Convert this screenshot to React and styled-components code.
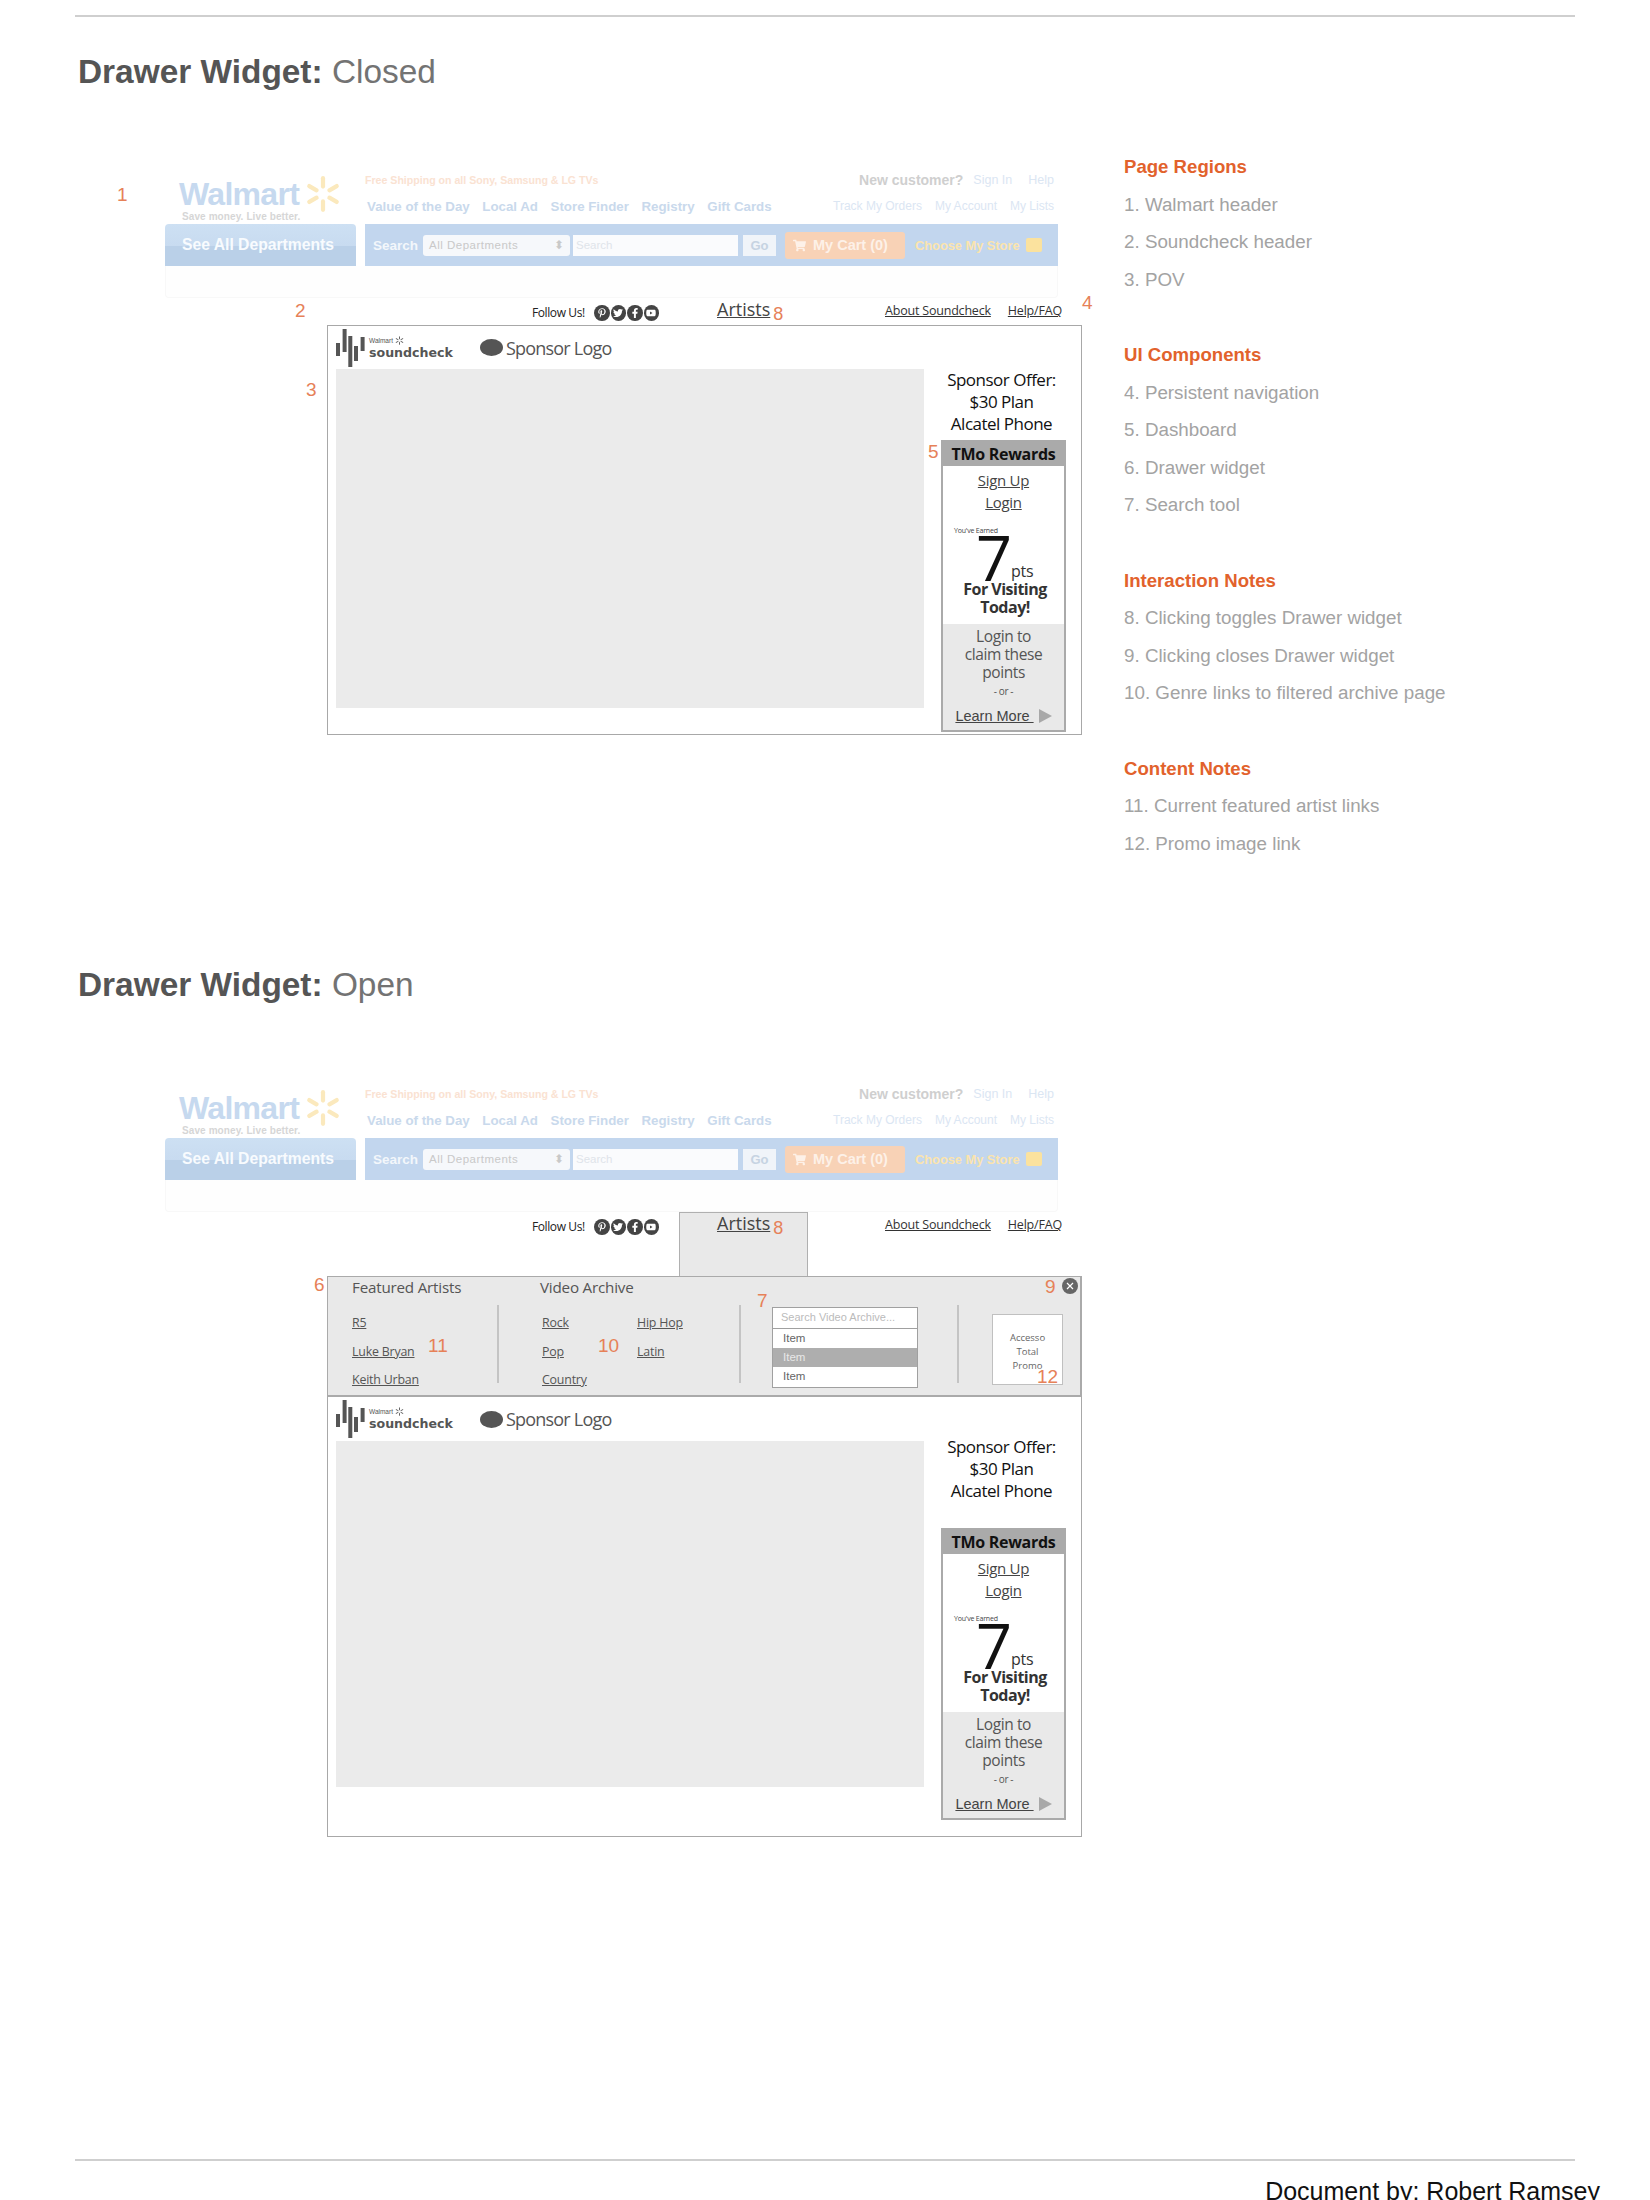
import styled, { createGlobalStyle } from "styled-components"
import { FaFacebookF, FaPinterestP, FaTwitter, FaYoutube, FaShoppingCart } from "react-icons/fa"

const GlobalStyle = createGlobalStyle`
    html, body {
        margin: 0;
        padding: 0;
        height: 2200px;
        overflow: hidden;
        background: #fff;
        font-family: "Liberation Sans", Arial, sans-serif;
    }
`

const wire = `"Open Sans", "Liberation Sans", sans-serif`

const Sheet = styled.div`
    width: 1650px;
    height: 2200px;
    padding-top: 15px;
    box-sizing: border-box;
    overflow: hidden;
`
const Rule = styled.hr`
    width: 1500px;
    height: 2px;
    margin: 0 0 0 75px;
    border: 0;
    background: #cfcfcf;
`
const Section = styled.section`
    height: ${(p) => p.$height}px;
    margin-top: ${(p) => p.$top}px;
`
const Title = styled.h2`
    margin: 0 0 58px 78px;
    font-size: 33.4px;
    line-height: 40px;
    font-weight: 700;
    color: #555;
    span {
        font-weight: 400;
        color: #737373;
    }
`
const Row = styled.div`
    display: flex;
    align-items: flex-start;
`
const WireColumn = styled.div`
    position: relative;
    width: 917px;
    margin-left: 165px;
    padding-top: ${(p) => p.$top}px;
    flex: none;
`
const Marker = styled.span`
    position: absolute;
    left: ${(p) => p.$x}px;
    top: ${(p) => p.$y}px;
    font-size: 19px;
    line-height: 22px;
    color: #e68158;
`

/* washed out walmart header */
const WalmartTop = styled.div`
    display: flex;
    width: 893px;
    height: 54px;
`
const LogoBlock = styled.div`
    position: relative;
    width: 200px;
    flex: none;
    padding: 8px 0 0 14px;
    box-sizing: border-box;
`
const LogoWord = styled.div`
    font-size: 32px;
    line-height: 33px;
    font-weight: 700;
    letter-spacing: -0.7px;
    color: #c6d9ef;
`
const LogoTag = styled.div`
    font-size: 10px;
    line-height: 11px;
    font-weight: 700;
    color: #d6d6d6;
    letter-spacing: 0.1px;
    margin-left: 3px;
`
const Spark = styled.div`
    position: absolute;
    left: 139px;
    top: 5px;
`
const TopRight = styled.div`
    flex: 1;
    padding-right: 4px;
`
const TopLine = styled.div`
    display: flex;
    justify-content: space-between;
    align-items: center;
    height: ${(p) => p.$h}px;
`
const Promo = styled.span`
    font-size: 10.6px;
    font-weight: 700;
    color: #fae2d2;
`
const LinkRun = styled.div`
    display: flex;
    align-items: center;
    gap: ${(p) => p.$gap}px;
    padding-left: ${(p) => p.$pad || 0}px;
`
const TopLink = styled.span`
    margin-left: ${(p) => p.$left || 0}px;
    font-size: ${(p) => p.$size}px;
    font-weight: ${(p) => (p.$bold ? 700 : 400)};
    color: ${(p) => p.$color};
`
const Bar = styled.div`
    display: flex;
    height: 42px;
    width: 893px;
    gap: 9px;
`
const DeptTab = styled.div`
    width: 191px;
    flex: none;
    box-sizing: border-box;
    padding-left: 17px;
    border-radius: 4px 4px 0 0;
    background: linear-gradient(#cde0f3 0, #c8dbf0 52%, #bad0e8 53%, #bad0e8 100%);
    color: #f8fbfe;
    font-size: 15.7px;
    font-weight: 700;
    line-height: 42px;
    white-space: nowrap;
`
const SearchBar = styled.div`
    flex: 1;
    display: flex;
    align-items: center;
    background: #c2d6ee;
    padding-left: 8px;
`
const SearchLabel = styled.span`
    width: 50px;
    flex: none;
    font-size: 13.5px;
    font-weight: 700;
    color: #f3f7fb;
`
const SelectBox = styled.div`
    display: flex;
    justify-content: space-between;
    align-items: center;
    width: 147px;
    height: 21px;
    box-sizing: border-box;
    padding: 0 6px;
    margin-right: 3px;
    background: #f6f8fb;
    border-radius: 3px;
    font-size: 11.5px;
    letter-spacing: 0.5px;
    color: #c9c9c9;
`
const SearchField = styled.div`
    width: 165px;
    height: 21px;
    box-sizing: border-box;
    padding-left: 3px;
    background: #fafbfd;
    font-size: 11.5px;
    line-height: 21px;
    color: #dfe4ea;
`
const GoButton = styled.div`
    width: 33px;
    height: 21px;
    margin: 0 9px 0 5px;
    background: #f0f4f9;
    text-align: center;
    font-size: 13px;
    font-weight: 700;
    line-height: 21px;
    color: #c6d3e2;
`
const CartButton = styled.div`
    display: flex;
    align-items: center;
    gap: 7px;
    width: 120px;
    height: 27px;
    box-sizing: border-box;
    padding-left: 8px;
    border-radius: 3px;
    background: #f8d2b6;
    font-size: 14.5px;
    font-weight: 700;
    color: #fdf1e8;
    white-space: nowrap;
`
const StoreLabel = styled.span`
    margin-left: 10px;
    font-size: 12.8px;
    font-weight: 700;
    color: #fbe4ad;
    white-space: nowrap;
`
const StoreIcon = styled.span`
    width: 16px;
    height: 14px;
    margin-left: 6px;
    border-radius: 2px;
    background: #fbe29e;
`
const BarPanel = styled.div`
    width: 893px;
    height: 32px;
    box-sizing: border-box;
    border: 1px solid #f8f8f8;
    border-top: 0;
    border-radius: 0 0 4px 4px;
    background: #fefefe;
`

/* soundcheck nav */
const SoundNav = styled.div`
    display: flex;
    align-items: flex-start;
    height: ${(p) => (p.$open ? 64 : 27)}px;
    padding-left: 367px;
    font-family: ${wire};
`
const FollowUs = styled.div`
    display: flex;
    align-items: center;
    width: 128px;
    flex: none;
    height: 25px;
    margin-top: 2px;
    font-size: 12px;
    letter-spacing: -0.4px;
    color: #222;
    span {
        width: 62px;
        flex: none;
    }
`
const SocialDot = styled.i`
    display: flex;
    align-items: center;
    justify-content: center;
    width: 16px;
    height: 16px;
    margin-right: 1px;
    border-radius: 50%;
    background: #444;
    color: #fff;
    font-size: 10px;
`
const ArtistsTab = styled.div`
    width: 129px;
    height: ${(p) => (p.$open ? 64 : 27)}px;
    flex: none;
    margin-left: 19px;
    box-sizing: border-box;
    padding-left: 37px;
    border: 1px solid ${(p) => (p.$open ? "#b0b0b0" : "transparent")};
    border-bottom: 0;
    background: ${(p) => (p.$open ? "#e9e9e9" : "transparent")};
    line-height: 20px;
    white-space: nowrap;
    u {
        font-size: 18px;
        color: #444;
    }
    span {
        font-family: "Liberation Sans", sans-serif;
        font-size: 18px;
        color: #e68158;
        margin-left: 3px;
        position: relative;
        top: 4px;
    }
`
const NavLink = styled.u`
    flex: none;
    margin-left: ${(p) => p.$left}px;
    margin-top: 3px;
    font-size: 12.5px;
    letter-spacing: -0.2px;
    line-height: 20px;
    color: #333;
`

/* drawer */
const Drawer = styled.div`
    position: relative;
    display: grid;
    grid-template-columns: 145px 242px 218px 125px;
    grid-template-rows: 24px 82px;
    width: 755px;
    height: 121px;
    margin-left: 162px;
    box-sizing: border-box;
    padding: 0 0 0 24px;
    border: 1px solid #aaa;
    border-width: 1px 2px 2px 1px;
    background: #e9e9e9;
    font-family: ${wire};
`
const DrawerHead = styled.div`
    font-size: 15.2px;
    line-height: 20px;
    letter-spacing: -0.2px;
    color: #555;
    padding-left: ${(p) => p.$pad || 0}px;
`
const DrawerCell = styled.div`
    box-sizing: border-box;
    padding-left: ${(p) => p.$pad || 0}px;
    margin-top: 4px;
    border-left: ${(p) => (p.$rule ? "2px solid #c4c4c4" : "0")};
`
const LinkColumn = styled.div`
    display: grid;
    grid-template-columns: ${(p) => p.$cols};
    grid-auto-rows: 28.5px;
    padding-top: 8px;
    font-size: 12.4px;
    letter-spacing: -0.2px;
    line-height: 20px;
    color: #555;
    u {
        justify-self: start;
    }
`
const SearchTool = styled.div`
    width: 146px;
    height: 81px;
    margin-top: 2px;
    box-sizing: border-box;
    border: 1px solid #a0a0a0;
    background: #fff;
    font-family: "Liberation Sans", sans-serif;
    font-size: 11.5px;
`
const SearchInput = styled.div`
    height: 20px;
    padding-left: 8px;
    border-bottom: 1px solid #a0a0a0;
    line-height: 19px;
    font-size: 11px;
    color: #bbb;
`
const SearchItem = styled.div`
    height: 19px;
    padding-left: 10px;
    line-height: 19px;
    color: ${(p) => (p.$active ? "#e8e8e8" : "#666")};
    background: ${(p) => (p.$active ? "#aeaeae" : "transparent")};
`
const PromoBox = styled.div`
    width: 71px;
    height: 71px;
    margin-top: 9px;
    box-sizing: border-box;
    padding-top: 16px;
    border: 1px solid #c0c0c0;
    background: #fff;
    text-align: center;
    font-size: 9.5px;
    line-height: 14px;
    color: #666;
`
const CloseButton = styled.div`
    position: absolute;
    right: 2px;
    top: 1px;
    display: flex;
    align-items: center;
    justify-content: center;
    width: 16px;
    height: 16px;
    border-radius: 50%;
    background: #666;
`

/* main frame */
const Frame = styled.div`
    width: 755px;
    height: ${(p) => p.$height}px;
    margin-left: 162px;
    box-sizing: border-box;
    padding: 0 0 0 8px;
    border: 1px solid #a8a8a8;
    border-top-width: ${(p) => (p.$open ? 0 : 1)}px;
    font-family: ${wire};
`
const FrameHead = styled.div`
    display: flex;
    align-items: center;
    height: ${(p) => p.$height}px;
`
const SoundLogo = styled.div`
    display: flex;
    align-items: center;
    width: 144px;
    flex: none;
`
const LogoText = styled.div`
    margin-left: 4px;
    small {
        display: flex;
        align-items: center;
        gap: 2px;
        font-family: "Liberation Sans", sans-serif;
        font-size: 6.5px;
        line-height: 9px;
        color: #555;
    }
    b {
        display: block;
        font-family: "DejaVu Sans", sans-serif;
        font-size: 12.6px;
        line-height: 15px;
        color: #555;
    }
`
const SponsorOval = styled.span`
    width: 23px;
    height: 17px;
    flex: none;
    border-radius: 50%;
    background: #555;
`
const SponsorName = styled.span`
    margin-left: 3px;
    font-size: 18px;
    font-weight: 400;
    letter-spacing: -0.8px;
    color: #555;
`
const FrameBody = styled.div`
    display: flex;
    align-items: flex-start;
`
const Pov = styled.div`
    width: 588px;
    height: ${(p) => p.$height}px;
    flex: none;
    background: #ebebeb;
`
const SideColumn = styled.div`
    width: 125px;
    flex: none;
    margin-left: 17px;
`
const OfferText = styled.div`
    margin-top: ${(p) => p.$top}px;
    margin-bottom: ${(p) => p.$gap}px;
    margin-left: -4px;
    text-align: center;
    font-size: 17px;
    line-height: 22px;
    letter-spacing: -0.5px;
    color: #111;
    white-space: nowrap;
`
const RewardsBox = styled.div`
    width: 125px;
    height: 292px;
    box-sizing: border-box;
    border: 2px solid #aaa;
    background: #fff;
    display: flex;
    flex-direction: column;
`
const RewardsHead = styled.div`
    height: 24px;
    flex: none;
    background: #aaa;
    text-align: center;
    font-size: 16px;
    font-weight: 700;
    line-height: 25px;
    letter-spacing: -0.3px;
    color: #111;
`
const RewardsLink = styled.u`
    display: block;
    text-align: center;
    font-size: 15px;
    line-height: 22px;
    letter-spacing: -0.3px;
    color: #444;
    &:first-of-type {
        margin-top: 3px;
    }
`
const EarnedBlock = styled.div`
    flex: 1;
    position: relative;
    padding-top: 13px;
`
const EarnedLabel = styled.div`
    padding-left: 11px;
    font-size: 7px;
    line-height: 9px;
    letter-spacing: -0.2px;
    color: #444;
`
const PointsRow = styled.div`
    display: flex;
    align-items: flex-end;
    height: 46px;
    padding-left: 33px;
    overflow: visible;
`
const PointsValue = styled.span`
    font-size: 63px;
    line-height: 44px;
    font-weight: 400;
    color: #111;
    position: relative;
    top: -2px;
`
const PointsUnit = styled.span`
    margin-left: -1px;
    font-size: 16px;
    line-height: 20px;
    letter-spacing: -0.3px;
    color: #333;
`
const VisitText = styled.div`
    margin-top: -1px;
    padding-left: 3px;
    text-align: center;
    font-size: 16px;
    font-weight: 700;
    line-height: 18px;
    letter-spacing: -0.5px;
    color: #333;
`
const ClaimBlock = styled.div`
    height: 106px;
    flex: none;
    box-sizing: border-box;
    padding-top: 3px;
    background: #e9e9e9;
    text-align: center;
    font-size: 15.5px;
    line-height: 18px;
    letter-spacing: -0.4px;
    color: #555;
`
const OrText = styled.div`
    font-size: 10px;
    line-height: 20px;
    color: #555;
`
const LearnMore = styled.div`
    display: flex;
    align-items: center;
    justify-content: center;
    gap: 5px;
    margin-top: 5px;
    font-family: "Liberation Sans", sans-serif;
    font-size: 14.5px;
    line-height: 20px;
    letter-spacing: 0;
    color: #444;
    u {
        white-space: pre;
    }
    i {
        width: 0;
        height: 0;
        border-left: 13px solid #a8a8a8;
        border-top: 7px solid transparent;
        border-bottom: 7px solid transparent;
    }
`

/* notes */
const Notes = styled.aside`
    margin-left: 42px;
    padding-top: 6px;
`
const NoteGroup = styled.div`
    margin-bottom: 53.5px;
`
const NoteHead = styled.h3`
    margin: 0;
    font-size: 18.6px;
    line-height: 22px;
    font-weight: 700;
    color: #e2622c;
`
const NoteItem = styled.div`
    margin-top: 15.5px;
    font-size: 18.8px;
    line-height: 22px;
    color: #a3a3a3;
    white-space: nowrap;
`
const FooterText = styled.div`
    padding: 16px 50px 0 0;
    text-align: right;
    font-size: 25px;
    line-height: 28px;
    color: #111;
`

const noteGroups = [
    { title: "Page Regions", items: ["1. Walmart header", "2. Soundcheck header", "3. POV"] },
    { title: "UI Components", items: ["4. Persistent navigation", "5. Dashboard", "6. Drawer widget", "7. Search tool"] },
    { title: "Interaction Notes", items: ["8. Clicking toggles Drawer widget", "9. Clicking closes Drawer widget", "10. Genre links to filtered archive page"] },
    { title: "Content Notes", items: ["11. Current featured artist links", "12. Promo image link"] },
]

const SparkIcon = ({ size, color }) => (
    <svg width={size} height={size} viewBox="0 0 36 36">
        {[0, 60, 120, 180, 240, 300].map((a) => (
            <rect key={a} x="16" y="1" width="4" height="12" rx="2" fill={color} transform={`rotate(${a} 18 18)`} />
        ))}
    </svg>
)

const WalmartHeader = () => (
    <div>
        <WalmartTop>
            <LogoBlock>
                <LogoWord>Walmart</LogoWord>
                <LogoTag>Save money. Live better.</LogoTag>
                <Spark><SparkIcon size={38} color="#fbe9bd" /></Spark>
            </LogoBlock>
            <TopRight>
                <TopLine $h={20}>
                    <Promo>Free Shipping on all Sony, Samsung &amp; LG TVs</Promo>
                    <LinkRun $gap={10}>
                        <TopLink $size={14} $bold $color="#cfcfcf">New customer?</TopLink>
                        <TopLink $size={12.5} $color="#dbe6f3">Sign In</TopLink>
                        <TopLink $size={12.5} $left={6} $color="#dbe6f3">Help</TopLink>
                    </LinkRun>
                </TopLine>
                <TopLine $h={32}>
                    <LinkRun $gap={12.6} $pad={2}>
                        <TopLink $size={13.3} $bold $color="#c9d9ec">Value of the Day</TopLink>
                        <TopLink $size={13.3} $bold $color="#c9d9ec">Local Ad</TopLink>
                        <TopLink $size={13.3} $bold $color="#c9d9ec">Store Finder</TopLink>
                        <TopLink $size={13.3} $bold $color="#c9d9ec">Registry</TopLink>
                        <TopLink $size={13.3} $bold $color="#c9d9ec">Gift Cards</TopLink>
                    </LinkRun>
                    <LinkRun $gap={13}>
                        <TopLink $size={12} $color="#dbe6f3">Track My Orders</TopLink>
                        <TopLink $size={12} $color="#dbe6f3">My Account</TopLink>
                        <TopLink $size={12} $color="#dbe6f3">My Lists</TopLink>
                    </LinkRun>
                </TopLine>
            </TopRight>
        </WalmartTop>
        <Bar>
            <DeptTab>See All Departments</DeptTab>
            <SearchBar>
                <SearchLabel>Search</SearchLabel>
                <SelectBox>All Departments<span>⬍</span></SelectBox>
                <SearchField>Search</SearchField>
                <GoButton>Go</GoButton>
                <CartButton><FaShoppingCart size={13} />My Cart (0)</CartButton>
                <StoreLabel>Choose My Store</StoreLabel>
                <StoreIcon />
            </SearchBar>
        </Bar>
        <BarPanel />
    </div>
)

const SoundcheckNav = ({ open }) => (
    <SoundNav $open={open}>
        <FollowUs>
            <span>Follow Us!</span>
            <SocialDot><FaPinterestP /></SocialDot>
            <SocialDot><FaTwitter /></SocialDot>
            <SocialDot><FaFacebookF /></SocialDot>
            <SocialDot><FaYoutube /></SocialDot>
        </FollowUs>
        <ArtistsTab $open={open}>
            <u>Artists</u><span>8</span>
        </ArtistsTab>
        <NavLink $left={77}>About Soundcheck</NavLink>
        <NavLink $left={17}>Help/FAQ</NavLink>
    </SoundNav>
)

const DrawerPanel = () => (
    <Drawer>
        <DrawerHead>Featured Artists</DrawerHead>
        <DrawerHead $pad={43}>Video Archive</DrawerHead>
        <div />
        <div />
        <DrawerCell>
            <LinkColumn $cols="1fr">
                <u>R5</u>
                <u>Luke Bryan</u>
                <u>Keith Urban</u>
            </LinkColumn>
        </DrawerCell>
        <DrawerCell $rule $pad={43}>
            <LinkColumn $cols="95px 1fr">
                <u>Rock</u>
                <u>Hip Hop</u>
                <u>Pop</u>
                <u>Latin</u>
                <u>Country</u>
            </LinkColumn>
        </DrawerCell>
        <DrawerCell $rule $pad={31}>
            <SearchTool>
                <SearchInput>Search Video Archive...</SearchInput>
                <SearchItem>Item</SearchItem>
                <SearchItem $active>Item</SearchItem>
                <SearchItem>Item</SearchItem>
            </SearchTool>
        </DrawerCell>
        <DrawerCell $rule $pad={33}>
            <PromoBox>Accesso<br />Total<br />Promo</PromoBox>
        </DrawerCell>
        <CloseButton>
            <svg width="8" height="8" viewBox="0 0 8 8">
                <path d="M1 1 L7 7 M7 1 L1 7" stroke="#fff" strokeWidth="1.2" />
            </svg>
        </CloseButton>
    </Drawer>
)

const MainFrame = ({ open }) => (
    <Frame $open={open} $height={open ? 440 : 410}>
        <FrameHead $height={open ? 44 : 43}>
            <SoundLogo>
                <svg width="29" height="38" viewBox="0 0 29 38">
                    <rect x="0" y="14" width="4" height="13" fill="#555" />
                    <rect x="6.6" y="0" width="4" height="23" fill="#555" />
                    <rect x="12.3" y="7" width="4" height="31" fill="#555" />
                    <rect x="18" y="17" width="4" height="15" fill="#555" />
                    <rect x="24.6" y="8" width="4" height="14" fill="#555" />
                </svg>
                <LogoText>
                    <small>Walmart <SparkIcon size={9} color="#666" /></small>
                    <b>soundcheck</b>
                </LogoText>
            </SoundLogo>
            <SponsorOval />
            <SponsorName>Sponsor Logo</SponsorName>
        </FrameHead>
        <FrameBody>
            <Pov $height={open ? 346 : 339} />
            <SideColumn>
                <OfferText $top={open ? -5 : 0} $gap={open ? 26 : 5}>
                    Sponsor Offer:<br />$30 Plan<br />Alcatel Phone
                </OfferText>
                <RewardsBox>
                    <RewardsHead>TMo Rewards</RewardsHead>
                    <RewardsLink>Sign Up</RewardsLink>
                    <RewardsLink>Login</RewardsLink>
                    <EarnedBlock>
                        <EarnedLabel>You've Earned</EarnedLabel>
                        <PointsRow>
                            <PointsValue>7</PointsValue>
                            <PointsUnit>pts</PointsUnit>
                        </PointsRow>
                        <VisitText>For Visiting<br />Today!</VisitText>
                    </EarnedBlock>
                    <ClaimBlock>
                        Login to<br />claim these<br />points
                        <OrText>- or -</OrText>
                        <LearnMore><u>Learn More </u><i /></LearnMore>
                    </ClaimBlock>
                </RewardsBox>
            </SideColumn>
        </FrameBody>
    </Frame>
)

const App = () => (
    <Sheet>
        <GlobalStyle />
        <Rule />
        <Section $height={913} $top={35}>
            <Title>Drawer Widget: <span>Closed</span></Title>
            <Row>
                <WireColumn $top={20}>
                    <WalmartHeader />
                    <SoundcheckNav />
                    <MainFrame />
                    <Marker $x={-48} $y={34}>1</Marker>
                    <Marker $x={130} $y={150}>2</Marker>
                    <Marker $x={141} $y={229}>3</Marker>
                    <Marker $x={917} $y={142}>4</Marker>
                    <Marker $x={763} $y={291}>5</Marker>
                </WireColumn>
                <Notes>
                    {noteGroups.map((group) => (
                        <NoteGroup key={group.title}>
                            <NoteHead>{group.title}</NoteHead>
                            {group.items.map((item) => <NoteItem key={item}>{item}</NoteItem>)}
                        </NoteGroup>
                    ))}
                </Notes>
            </Row>
        </Section>
        <Section $height={1194} $top={0}>
            <Title>Drawer Widget: <span>Open</span></Title>
            <Row>
                <WireColumn $top={21}>
                    <WalmartHeader />
                    <SoundcheckNav open />
                    <DrawerPanel />
                    <MainFrame open />
                    <Marker $x={149} $y={211}>6</Marker>
                    <Marker $x={592} $y={227}>7</Marker>
                    <Marker $x={880} $y={213}>9</Marker>
                    <Marker $x={433} $y={272}>10</Marker>
                    <Marker $x={263} $y={272}>11</Marker>
                    <Marker $x={872} $y={303}>12</Marker>
                </WireColumn>
            </Row>
        </Section>
        <Rule />
        <FooterText>Document by: Robert Ramsey</FooterText>
    </Sheet>
)

export default App
